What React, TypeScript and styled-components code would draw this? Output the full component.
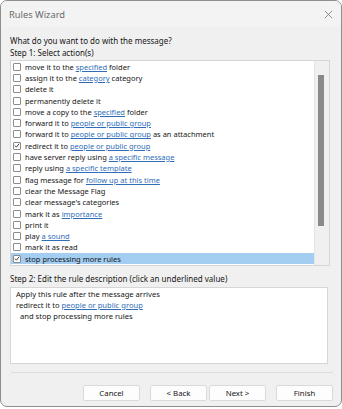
import React from "react";
import styled, { createGlobalStyle } from "styled-components";

const GlobalStyle = createGlobalStyle`
  html, body { margin: 0; padding: 0; background: #ffffff; }
  body { font-family: "Noto Sans", "Open Sans", sans-serif; color: #1a1a1a; }
  * { box-sizing: border-box; }
`;

const Window = styled.div`
  width: 342px;
  height: 407px;
  border: 1px solid #8e8e8e;
  border-radius: 7px;
  background: #f0f0f0;
  display: flex;
  flex-direction: column;
  overflow: hidden;
`;

const TitleBar = styled.div`
  height: 26px;
  flex: none;
  display: flex;
  align-items: center;
  justify-content: space-between;
  padding: 1px 7px 0 8px;
  background: #f3f3f3;
  color: #6a6a6a;
  font-size: 9.3px;
`;

const CloseButton = styled.button`
  border: none;
  background: transparent;
  padding: 0;
  width: 12px;
  height: 12px;
  display: flex;
  align-items: center;
  justify-content: center;
`;

const Body = styled.div`
  flex: 1;
  display: flex;
  flex-direction: column;
  padding: 0 8px 0 9px;
`;

const Label = styled.div<{ $top: number }>`
  font-size: 8px;
  line-height: 12px;
  margin-top: ${(p) => p.$top}px;
  color: #161616;
  white-space: nowrap;
`;

const ListBox = styled.div`
  margin-top: 1px;
  width: 320px;
  height: 206px;
  border: 1px solid #d6d6d6;
  background: #fff;
  display: flex;
`;

const Rows = styled.div`
  flex: 1;
  display: flex;
  flex-direction: column;
`;

const Row = styled.div<{ $selected?: boolean }>`
  height: 11.3px;
  display: flex;
  align-items: center;
  gap: 4px;
  padding-left: 2px;
  font-size: 7.5px;
  color: #161616;
  white-space: nowrap;
  background: ${(p) => (p.$selected ? "#a3cdf1" : "transparent")};
`;

const Box = styled.span`
  width: 8px;
  height: 8px;
  flex: none;
  border: 1px solid #8c8c8c;
  border-radius: 1px;
  background: #fff;
  display: flex;
  align-items: center;
  justify-content: center;
`;

const Link = styled.span`
  color: #2f6db9;
  text-decoration: underline;
  text-underline-offset: 1px;
`;

const ScrollTrack = styled.div`
  width: 15px;
  flex: none;
  background: #f0f0f0;
  border-left: 1px solid #e4e4e4;
  padding: 14px 0 0 3px;
`;

const Thumb = styled.div`
  width: 6px;
  height: 151px;
  background: #8a8a8a;
`;

const DescBox = styled.div`
  margin-top: 2px;
  width: 318px;
  height: 77px;
  border: 1px solid #d6d6d6;
  background: #fff;
  padding: 1px 5px;
  font-size: 7.6px;
  line-height: 11px;
  color: #161616;
`;

const DescLine = styled.div<{ $indent?: number }>`
  padding-left: ${(p) => p.$indent ?? 0}px;
  white-space: nowrap;
`;

const Separator = styled.div`
  margin-top: 8px;
  margin-left: 1px;
  height: 1px;
  width: 322px;
  background: #dcdcdc;
`;

const ButtonRow = styled.div`
  margin-top: 12px;
  width: 323px;
  display: flex;
  justify-content: flex-end;
`;

const Button = styled.button<{ $gap: number }>`
  margin-left: ${(p) => p.$gap}px;
  width: 57px;
  height: 16px;
  border: 1px solid #dadada;
  border-radius: 2px;
  background: #fdfdfd;
  font-family: "Noto Sans", "Open Sans", sans-serif;
  font-size: 7.8px;
  color: #161616;
  padding: 0;
`;

type Part = string | { link: string };

const actions: { parts: Part[]; checked?: boolean; selected?: boolean }[] = [
  { parts: ["move it to the ", { link: "specified" }, " folder"] },
  { parts: ["assign it to the ", { link: "category" }, " category"] },
  { parts: ["delete it"] },
  { parts: ["permanently delete it"] },
  { parts: ["move a copy to the ", { link: "specified" }, " folder"] },
  { parts: ["forward it to ", { link: "people or public group" }] },
  { parts: ["forward it to ", { link: "people or public group" }, " as an attachment"] },
  { parts: ["redirect it to ", { link: "people or public group" }], checked: true },
  { parts: ["have server reply using ", { link: "a specific message" }] },
  { parts: ["reply using ", { link: "a specific template" }] },
  { parts: ["flag message for ", { link: "follow up at this time" }] },
  { parts: ["clear the Message Flag"] },
  { parts: ["clear message's categories"] },
  { parts: ["mark it as ", { link: "importance" }] },
  { parts: ["print it"] },
  { parts: ["play ", { link: "a sound" }] },
  { parts: ["mark it as read"] },
  { parts: ["stop processing more rules"], checked: true, selected: true },
];

const Check = () => (
  <svg width="7" height="7" viewBox="0 0 10 10">
    <path d="M1.5 5.2 L4 7.8 L8.6 2" fill="none" stroke="#1a1a1a" strokeWidth="1.4" />
  </svg>
);

export default function App() {
  return (
    <>
      <GlobalStyle />
      <Window>
        <TitleBar>
          <span>Rules Wizard</span>
          <CloseButton aria-label="Close">
            <svg width="9" height="9" viewBox="0 0 10 10">
              <path d="M1 1 L9 9 M9 1 L1 9" stroke="#777" strokeWidth="0.9" />
            </svg>
          </CloseButton>
        </TitleBar>
        <Body>
          <Label $top={8}>What do you want to do with the message?</Label>
          <Label $top={0}>Step 1: Select action(s)</Label>
          <ListBox>
            <Rows>
              {actions.map((a, i) => (
                <Row key={i} $selected={a.selected}>
                  <Box>{a.checked && <Check />}</Box>
                  <span>
                    {a.parts.map((p, j) =>
                      typeof p === "string" ? (
                        <React.Fragment key={j}>{p}</React.Fragment>
                      ) : (
                        <Link key={j}>{p.link}</Link>
                      )
                    )}
                  </span>
                </Row>
              ))}
            </Rows>
            <ScrollTrack>
              <Thumb />
            </ScrollTrack>
          </ListBox>
          <Label $top={7}>Step 2: Edit the rule description (click an underlined value)</Label>
          <DescBox>
            <DescLine>Apply this rule after the message arrives</DescLine>
            <DescLine>
              redirect it to <Link>people or public group</Link>
            </DescLine>
            <DescLine $indent={4}>and stop processing more rules</DescLine>
          </DescBox>
          <Separator />
          <ButtonRow>
            <Button $gap={0}>Cancel</Button>
            <Button $gap={10}>&lt; Back</Button>
            <Button $gap={2}>Next &gt;</Button>
            <Button $gap={10}>Finish</Button>
          </ButtonRow>
        </Body>
      </Window>
    </>
  );
}
